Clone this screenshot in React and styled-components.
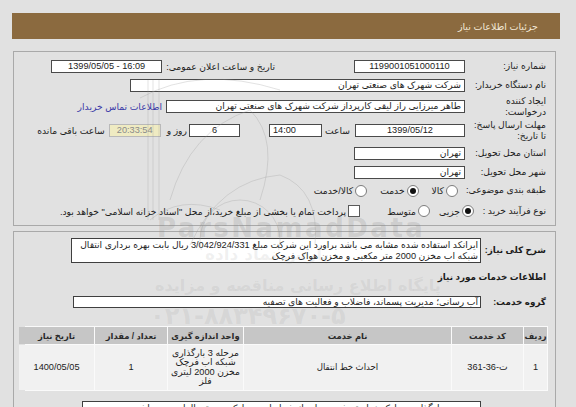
import React from "react";
import styled, { createGlobalStyle } from "styled-components";

const GlobalStyle = createGlobalStyle`
  html, body { margin: 0; padding: 0; background: #e1e1e1; }
  body {
    font-family: "Liberation Sans", "DejaVu Sans", sans-serif;
    font-size: 9.2px;
    color: #1c1c1c;
  }
`;

const Page = styled.div`
  position: relative;
  direction: rtl;
  width: 576px;
  height: 407px;
  overflow: hidden;
  box-sizing: border-box;
  padding: 13px 16px 0 12px;
`;

const Header = styled.div`
  height: 26px;
  background: #8b6a3f;
  display: flex;
  align-items: center;
  padding-right: 22px;
`;

const Title = styled.span`
  color: #f2e8d6;
  font-size: 9.5px;
`;

const Panel = styled.div`
  margin: ${(p) => p.$top}px 4px 0 1px;
  border: 1px solid #a9a9a9;
  padding-top: ${(p) => p.$pad}px;
  box-sizing: border-box;
  height: ${(p) => (p.$h ? `${p.$h}px` : "auto")};
`;

const Row = styled.div`
  display: flex;
  align-items: center;
  height: ${(p) => (p.$h ? `${p.$h}px` : "auto")};
  padding-right: 9px;
  margin-top: ${(p) => p.$mt || 0}px;
`;

const Label = styled.div`
  flex: 0 0 ${(p) => p.$w || 81}px;
  line-height: 11px;
  white-space: nowrap;
  font-weight: ${(p) => (p.$bold ? "bold" : "normal")};
  font-size: ${(p) => (p.$bold ? "8.8px" : "9.2px")};
`;

const Field = styled.div`
  box-sizing: border-box;
  width: ${(p) => p.$w}px;
  height: 13px;
  margin-right: ${(p) => p.$mr || 0}px;
  border: 1px solid #4a4a4a;
  background: #fff;
  line-height: 11px;
  padding: 0 3px;
  text-align: ${(p) => p.$align || "right"};
  white-space: nowrap;
  overflow: hidden;
  direction: ${(p) => (p.$ltr ? "ltr" : "rtl")};
`;

const TimeBox = styled(Field)`
  background: #efebc2;
  border-color: #b9b9b9;
  color: #8a8a8a;
  text-align: center;
`;

const Text = styled.span`
  margin-right: ${(p) => p.$mr || 0}px;
  white-space: nowrap;
`;

const Link = styled(Text)`
  color: #3a3aa8;
`;

const Radio = styled.span`
  box-sizing: border-box;
  width: 12px;
  height: 12px;
  border-radius: 50%;
  border: 1px solid #7c7c7c;
  background: #fff;
  margin-right: ${(p) => p.$mr || 0}px;
  display: inline-flex;
  align-items: center;
  justify-content: center;
  &::after {
    content: "";
    width: 6px;
    height: 6px;
    border-radius: 50%;
    background: ${(p) => (p.$on ? "#111" : "transparent")};
  }
`;

const CheckBox = styled.span`
  box-sizing: border-box;
  width: 12px;
  height: 12px;
  border: 1px solid #5a5a5a;
  background: #fff;
  margin-right: ${(p) => p.$mr || 0}px;
`;

const TextBox = styled.div`
  box-sizing: border-box;
  width: ${(p) => p.$w}px;
  height: ${(p) => p.$h}px;
  margin-right: ${(p) => p.$mr || 0}px;
  border: 1px solid #3f3f3f;
  background: #fff;
  line-height: ${(p) => p.$lh || 11}px;
  padding: ${(p) => (p.$lh ? "0 2px" : "1px 2px")};
  overflow: hidden;
  white-space: nowrap;
`;

const Heading = styled.div`
  margin-top: 7px;
  padding-right: 9px;
  line-height: 14px;
  font-weight: bold;
  font-size: 8.8px;
`;

const Table = styled.div`
  display: grid;
  grid-template-columns: 23px 71px 207px 75px 72px 75px;
  grid-template-rows: 17px 45px;
  gap: 1px;
  margin: 18px 7px 0 11px;
  background: #fafafa;
  padding: 1px;
  box-sizing: border-box;
`;

const HeadCell = styled.div`
  background: #c6c6c6;
  font-weight: bold;
  font-size: 8.4px;
  display: flex;
  align-items: center;
  justify-content: center;
  color: #2a2a2a;
`;

const Cell = styled.div`
  background: #f1f1f1;
  display: flex;
  align-items: center;
  justify-content: center;
  text-align: center;
  line-height: 9.5px;
  font-size: ${(p) => (p.$small ? "8.6px" : "9.2px")};
`;

const Note = styled(TextBox)`
  margin-top: 10px;
  margin-right: 74px;
  height: 20px;
`;

const Mark = styled.div`
  position: absolute;
  left: ${(p) => p.$x}px;
  top: ${(p) => p.$y}px;
  font-family: "DejaVu Sans", sans-serif;
  font-weight: bold;
  font-size: ${(p) => p.$size}px;
  color: rgba(140, 140, 140, ${(p) => p.$a || 0.3});
  white-space: nowrap;
  pointer-events: none;
  direction: ${(p) => (p.$ltr ? "ltr" : "rtl")};
  letter-spacing: ${(p) => p.$ls || 0}px;
`;

const Flower = styled.svg`
  position: absolute;
  left: 130px;
  top: 70px;
  pointer-events: none;
`;

const columns = ["ردیف", "کد خدمت", "نام خدمت", "واحد اندازه گیری", "تعداد / مقدار", "تاریخ نیاز"];

export default function App() {
  return (
    <Page>
      <GlobalStyle />
      <Header>
        <Title>جزئیات اطلاعات نیاز</Title>
      </Header>

      <Panel $top={12} $pad={4} $h={175}>
        <Row $h={20}>
          <Label>شماره نیاز:</Label>
          <Field $w={111} $align="center">1199001051000110</Field>
          <Text $mr={79}>تاریخ و ساعت اعلان عمومی:</Text>
          <Field $w={111} $mr={4} $align="center" $ltr>1399/05/05 - 16:09</Field>
        </Row>
        <Row $h={19}>
          <Label>نام دستگاه خریدار:</Label>
          <Field $w={335}>شرکت شهرک های صنعتی تهران</Field>
        </Row>
        <Row $h={23}>
          <Label>ایجاد کننده<br />درخواست:</Label>
          <Field $w={299}>طاهر میرزایی راز لیقی کارپرداز  شرکت شهرک های صنعتی تهران</Field>
          <Link $mr={4}>اطلاعات تماس خریدار</Link>
        </Row>
        <Row $h={25}>
          <Label>مهلت ارسال پاسخ:<br />تا تاریخ:</Label>
          <Field $w={110} $align="center">1399/05/12</Field>
          <Text $mr={5}>ساعت</Text>
          <Field $w={53} $mr={3} $align="left" $ltr>14:00</Field>
          <Field $w={51} $mr={29} $align="center">6</Field>
          <Text $mr={2}>روز و</Text>
          <TimeBox $w={52} $mr={6} $ltr>20:33:54</TimeBox>
          <Text $mr={4}>ساعت باقی مانده</Text>
        </Row>
        <Row $h={20}>
          <Label>استان محل تحویل:</Label>
          <Field $w={111}>تهران</Field>
        </Row>
        <Row $h={19}>
          <Label>شهر محل تحویل:</Label>
          <Field $w={111}>تهران</Field>
        </Row>
        <Row $h={17}>
          <Label>طبقه بندی موضوعی:</Label>
          <Radio $mr={7} />
          <Text $mr={2}>کالا</Text>
          <Radio $mr={13} $on />
          <Text $mr={2}>خدمت</Text>
          <Radio $mr={13} />
          <Text $mr={2}>کالا/خدمت</Text>
        </Row>
        <Row $h={24}>
          <Label $w={72}>نوع فرآیند خرید :</Label>
          <Radio $on />
          <Text $mr={2}>جزیی</Text>
          <Radio $mr={9} />
          <Text $mr={2}>متوسط</Text>
          <CheckBox $mr={27} />
          <Text $mr={2}>پرداخت تمام یا بخشی از مبلغ خرید،از محل "اسناد خزانه اسلامی" خواهد بود.</Text>
        </Row>
      </Panel>

      <Panel $top={5} $pad={6} $h={200}>
        <Row>
          <Label $w={65} $bold>شرح کلی نیاز:</Label>
          <TextBox $w={410} $h={25}>
            ایرانکد استفاده شده مشابه می باشد براورد این شرکت مبلغ 3/042/924/331 ریال بابت  بهره برداری انتقال
            <br />
            شبکه اب مخزن 2000  متر مکعبی و مخزن هواک فرچک
          </TextBox>
        </Row>
        <Heading>اطلاعات خدمات مورد نیاز</Heading>
        <Row $mt={12}>
          <Label $w={65} $bold>گروه خدمت:</Label>
          <TextBox $w={408} $h={12} $lh={10}>
            آب رسانی؛ مدیریت پسماند، فاضلاب و فعالیت های تصفیه
          </TextBox>
        </Row>
        <Table>
          {columns.map((c) => (
            <HeadCell key={c}>{c}</HeadCell>
          ))}
          <Cell>1</Cell>
          <Cell>ت-36-361</Cell>
          <Cell $small>احداث خط انتقال</Cell>
          <Cell>
            مرحله 3 بارگذاری
            <br />
            شبکه اب فرچک
            <br />
            مخزن 2000 لیتری
            <br />
            فلز
          </Cell>
          <Cell>1</Cell>
          <Cell>1400/05/05</Cell>
        </Table>
        <Note $w={399}>
          مهم مهم بارگذاری مدارک خواسته شده در احراز شرایط در مدارک پیوستی الزامی می باشد در صورت
        </Note>
      </Panel>

      <Flower width="200" height="180" viewBox="0 0 200 180" fill="none" stroke="rgba(150,150,150,0.28)" strokeWidth="1">
        <path d="M18 10 V150 M23 10 V150 M29 10 V150" />
        <path d="M10 28 Q70 -5 150 20" />
        <path d="M40 130 Q60 60 120 40 Q150 70 130 130" />
        <path d="M60 175 Q90 110 150 105 Q190 120 185 175" />
        <path d="M20 150 Q50 125 90 140" />
        <circle cx="110" cy="170" r="40" />
      </Flower>

      <Mark $x={157} $y={213} $size={26} $a={0.24} $ltr $ls={2.5}>ParsNamadData</Mark>
      <Mark $x={205} $y={244} $size={17} $a={0.12}>پارس نماد داده</Mark>
      <Mark $x={155} $y={276} $size={16} $a={0.14}>پایگاه اطلاع رسانی مناقصه و مزایده</Mark>
      <Mark $x={150} $y={302} $size={24} $a={0.14} $ltr>۰۲۱-۸۸۳۴۹۶۷۰-۵</Mark>
    </Page>
  );
}
